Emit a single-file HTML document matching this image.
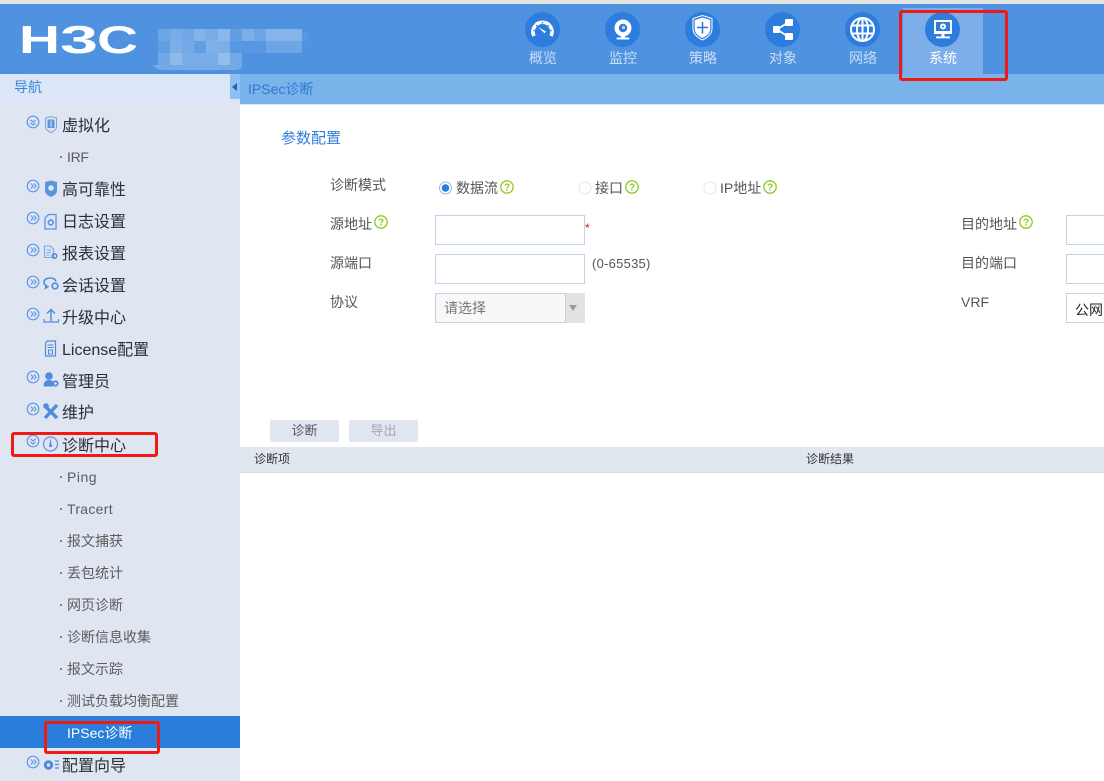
<!DOCTYPE html>
<html><head><meta charset="utf-8">
<style>
html,body{margin:0;padding:0;width:1104px;height:781px;overflow:hidden;background:#fff}
body{position:relative;font-family:"Liberation Sans","Noto Sans CJK SC",sans-serif;color:#555}
.a{position:absolute;white-space:nowrap}
.t{position:absolute;white-space:nowrap;line-height:20px;transform:translateY(-10px)}
.m{font-size:16px;color:#2a2f38;left:62px;margin-top:2px}
.s{font-size:14px;color:#5c5c5c;left:67px}
.d{position:absolute;left:60px;width:2px;height:2px;background:#4a8fdc}
.l{font-size:14px;color:#555}
.nv{font-size:14px;color:#c9def6;width:80px;text-align:center}
.inp{position:absolute;box-sizing:border-box;width:150px;height:30px;border:1px solid #c3d2e8;background:#fff}
.red{position:absolute;box-sizing:border-box;border:3px solid #f01a14;border-radius:3px}
svg{position:absolute;overflow:visible}
</style></head><body>
<div class="a" style="left:0;top:0;width:1104px;height:4px;background:#e4e4e4"></div>
<div class="a" style="left:0;top:4px;width:1104px;height:70px;background:#4f93e0"></div>
<div class="a" style="left:240px;top:74px;width:864px;height:30px;background:#7ab3ea"></div>
<div class="a" style="left:240px;top:104px;width:864px;height:1px;background:#d8e6f6"></div>
<div class="a" style="left:0;top:74px;width:240px;height:707px;background:#dfe5f1"></div>
<div class="a" style="left:0;top:74px;width:240px;height:26px;background:#dbe7f8"></div>
<div class="a" style="left:230px;top:74px;width:10px;height:25px;background:#8ec0f4"></div>
<div class="a" style="left:232px;top:83px;width:0;height:0;border-right:5px solid #1f66b8;border-top:4px solid transparent;border-bottom:4px solid transparent"></div>

<svg style="left:0;top:0" width="320" height="75">
<g font-family="Liberation Sans" font-weight="bold" font-size="39" fill="#fff" lengthAdjust="spacingAndGlyphs">
<text x="19" y="53" textLength="41" lengthAdjust="spacingAndGlyphs">H</text>
<text x="60" y="53" textLength="38" lengthAdjust="spacingAndGlyphs">3</text>
<text x="97" y="53" textLength="41" lengthAdjust="spacingAndGlyphs">C</text>
</g>
<g fill="#fff" opacity=".85">
<rect x="158" y="29" width="12" height="12" opacity=".2"/><rect x="170" y="29" width="12" height="12" opacity=".27"/><rect x="182" y="29" width="12" height="12" opacity=".22"/><rect x="194" y="29" width="12" height="12" opacity=".35"/><rect x="206" y="29" width="12" height="12" opacity=".28"/><rect x="218" y="29" width="12" height="12" opacity=".4"/><rect x="230" y="29" width="12" height="12" opacity=".12"/><rect x="242" y="29" width="12" height="12" opacity=".3"/><rect x="254" y="29" width="12" height="12" opacity=".2"/><rect x="266" y="29" width="36" height="12" opacity=".36"/>
<rect x="158" y="41" width="12" height="12" opacity=".12"/><rect x="170" y="41" width="12" height="12" opacity=".3"/><rect x="182" y="41" width="12" height="12" opacity=".24"/><rect x="194" y="41" width="12" height="12" opacity=".12"/><rect x="206" y="41" width="12" height="12" opacity=".32"/><rect x="218" y="41" width="12" height="12" opacity=".3"/><rect x="230" y="41" width="36" height="12" opacity=".06"/><rect x="266" y="41" width="36" height="12" opacity=".2"/>
<rect x="158" y="53" width="12" height="12" opacity=".22"/><rect x="170" y="53" width="12" height="12" opacity=".42"/><rect x="182" y="53" width="36" height="12" opacity=".28"/><rect x="218" y="53" width="12" height="12" opacity=".46"/><rect x="230" y="53" width="12" height="12" opacity=".24"/>
<path d="M153 65h89q0 5-8 5h-70q-8 0-11-5z" opacity=".25"/><path d="M302 29q8 4 8 12h-8z" opacity=".06"/>
</g></svg>

<div class="a" style="left:903px;top:8px;width:80px;height:66px;background:#7eaeea"></div>

<svg style="left:0;top:0" width="1104" height="75">
<g fill="#2c7ddd"><circle cx="542.500" cy="29.500" r="17.500"/><circle cx="622.500" cy="29.500" r="17.500"/><circle cx="702.500" cy="29.500" r="17.500"/><circle cx="782.500" cy="29.500" r="17.500"/><circle cx="862.500" cy="29.500" r="17.500"/><circle cx="942.500" cy="29.500" r="17.500"/></g>
<!-- gauge -->
<path d="M534 36A9.500 9.500 0 1 1 551 36" fill="none" stroke="#fff" stroke-width="3.600"/>
<path d="M538 27l8 4.500-1.500 1.800z" fill="#fff"/>
<g fill="#2c7ddd"><circle cx="534" cy="30.500" r=".8"/><circle cx="536.500" cy="25.500" r=".8"/><circle cx="542.500" cy="22.800" r=".8"/><circle cx="548.500" cy="25.500" r=".8"/><circle cx="551" cy="30.500" r=".8"/></g>
<!-- camera -->
<circle cx="623" cy="28" r="8.500" fill="#fff"/><circle cx="623" cy="28" r="4.200" fill="#2c7ddd"/><circle cx="623.500" cy="27.500" r="1.600" fill="#fff" opacity=".7"/>
<rect x="621" y="35" width="4" height="3" fill="#fff"/><rect x="616.500" y="37.500" width="13" height="2" rx="1" fill="#fff"/>
<!-- shield -->
<path d="M702.500 15.500l9.500 3v10q0 7-9.500 11.500q-9.500-4.500-9.500-11.500v-10z" fill="none" stroke="#fff" stroke-width="1"/>
<path d="M702.500 17.500l7.800 2.500v8.500q0 6-7.800 9.500q-7.800-3.500-7.800-9.500v-8.500z" fill="#fff"/>
<path d="M702.500 22v11.500M697 27.500h11" stroke="#2c7ddd" stroke-width="1.500"/>
<!-- share -->
<rect x="773" y="26" width="7" height="7" fill="#fff" rx="1"/><rect x="785" y="19" width="8" height="7" fill="#fff" rx="1"/><rect x="785" y="33" width="8" height="7" fill="#fff" rx="1"/>
<path d="M777 29.500L788 22.500M777 29.500L788 36.500" stroke="#fff" stroke-width="1.800"/>
<!-- globe -->
<g fill="none" stroke="#fff" stroke-width="2"><circle cx="862.500" cy="29.500" r="11.500"/><ellipse cx="862.500" cy="29.500" rx="5.500" ry="11.500"/><path d="M862.500 18v23M852 25.500h21M852 33.500h21"/></g>
<!-- monitor -->
<rect x="935" y="21" width="16" height="12" fill="none" stroke="#fff" stroke-width="2"/>
<rect x="934" y="31" width="18" height="3" fill="#fff"/>
<rect x="941.500" y="34" width="3" height="2.500" fill="#fff"/><rect x="936" y="36.500" width="14" height="1.800" fill="#fff"/>
<circle cx="943" cy="26.500" r="3" fill="#fff"/><circle cx="943" cy="26.500" r="1" fill="#2c7ddd"/>
</svg>

<div class="t nv" style="left:503px;top:58px">概览</div>
<div class="t nv" style="left:583px;top:58px">监控</div>
<div class="t nv" style="left:663px;top:58px">策略</div>
<div class="t nv" style="left:743px;top:58px">对象</div>
<div class="t nv" style="left:823px;top:58px">网络</div>
<div class="t nv" style="left:903px;top:58px;color:#fff">系统</div>

<div class="t" style="left:14px;top:87px;font-size:14px;color:#3d84d8">导航</div>
<div class="t" style="left:248px;top:89px;font-size:14px;color:#2f78d2">IPSec诊断</div>

<!-- sidebar -->
<div class="a" style="left:0;top:716px;width:240px;height:32px;background:#2b7ddb"></div>
<div class="t m" style="top:125px">虚拟化</div>
<div class="d" style="top:156px"></div><div class="t s" style="top:157px;letter-spacing:-.3px">IRF</div>
<div class="t m" style="top:189px">高可靠性</div>
<div class="t m" style="top:221px">日志设置</div>
<div class="t m" style="top:253px">报表设置</div>
<div class="t m" style="top:285px">会话设置</div>
<div class="t m" style="top:317px">升级中心</div>
<div class="t m" style="top:349px">License配置</div>
<div class="t m" style="top:381px">管理员</div>
<div class="t m" style="top:412px">维护</div>
<div class="t m" style="top:445px">诊断中心</div>
<div class="d" style="top:476px"></div><div class="t s" style="top:477px;letter-spacing:.5px">Ping</div>
<div class="d" style="top:508px"></div><div class="t s" style="top:509px;letter-spacing:.3px">Tracert</div>
<div class="d" style="top:540px"></div><div class="t s" style="top:541px">报文捕获</div>
<div class="d" style="top:572px"></div><div class="t s" style="top:573px">丢包统计</div>
<div class="d" style="top:604px"></div><div class="t s" style="top:605px">网页诊断</div>
<div class="d" style="top:636px"></div><div class="t s" style="top:637px">诊断信息收集</div>
<div class="d" style="top:668px"></div><div class="t s" style="top:669px">报文示踪</div>
<div class="d" style="top:700px"></div><div class="t s" style="top:701px">测试负载均衡配置</div>
<div class="t s" style="top:733px;color:#fff">IPSec诊断</div>
<div class="t m" style="top:765px">配置向导</div>

<svg style="left:0;top:100px" width="240" height="681" viewBox="0 100 240 681">
<g fill="none" stroke="#5d9ae4" stroke-width="1.200">
<circle cx="33" cy="122" r="5.800"/><circle cx="33" cy="186" r="5.800"/><circle cx="33" cy="218" r="5.800"/><circle cx="33" cy="250" r="5.800"/><circle cx="33" cy="282" r="5.800"/><circle cx="33" cy="314" r="5.800"/><circle cx="33" cy="377" r="5.800"/><circle cx="33" cy="409" r="5.800"/><circle cx="33" cy="441" r="5.800"/><circle cx="33" cy="762" r="5.800"/>
<path d="M30.500 120l2.500 2 2.500-2M30.500 123l2.500 2 2.500-2M30.500 439l2.500 2 2.500-2M30.500 442l2.500 2 2.500-2"/>
<path d="M31 183.500l2 2.500-2 2.500M34 183.500l2 2.500-2 2.500M31 215.500l2 2.500-2 2.500M34 215.500l2 2.500-2 2.500M31 247.500l2 2.500-2 2.500M34 247.500l2 2.500-2 2.500M31 279.500l2 2.500-2 2.500M34 279.500l2 2.500-2 2.500M31 311.500l2 2.500-2 2.500M34 311.500l2 2.500-2 2.500M31 374.500l2 2.500-2 2.500M34 374.500l2 2.500-2 2.500M31 406.500l2 2.500-2 2.500M34 406.500l2 2.500-2 2.500M31 759.500l2 2.500-2 2.500M34 759.500l2 2.500-2 2.500"/>
</g>
<!-- virtual shield -->
<path d="M45.500 118l5.500-1.500 5.500 1.500v9q0 3-5.500 5.500q-5.500-2.500-5.500-5.500z" fill="none" stroke="#76a6e4" stroke-width="1"/><rect x="47.500" y="119.500" width="7" height="8.500" fill="#5f96dd"/><rect x="50.500" y="120.500" width="1" height="6.500" fill="#dfe5f1"/>
<!-- HA shield -->
<path d="M45 182l6-1.500 6 1.500v9q0 3.500-6 6q-6-2.500-6-6z" fill="#5b95e0"/><circle cx="51" cy="188" r="2.800" fill="#dfe5f1"/>
<!-- log doc -->
<path d="M48.500 214.500h7.500v14.500h-11v-11z" fill="none" stroke="#5b95e0" stroke-width="1.300"/><circle cx="50.800" cy="222.500" r="2.400" fill="none" stroke="#5b95e0" stroke-width="1.700"/>
<!-- report -->
<path d="M44.500 246h6l3 3v8.500h-9z" fill="none" stroke="#76a6e4" stroke-width="1.100"/><path d="M46.500 250h4.500M46.500 252.500h4.500M46.500 255h3" stroke="#76a6e4"/><circle cx="54.500" cy="256" r="2.200" fill="none" stroke="#4f8cdc" stroke-width="1.600"/>
<!-- chat -->
<path d="M50 278c-3.500 0-6 1.700-6 4.200 0 1.500 1 2.800 2.300 3.500l-.7 2.300 3-1.700" fill="none" stroke="#4f8cdc" stroke-width="1.600"/><path d="M50 278c3.500 0 5.500 1.500 6 3.500" fill="none" stroke="#4f8cdc" stroke-width="1.600"/><circle cx="55" cy="286" r="2.800" fill="none" stroke="#4f8cdc" stroke-width="1.700"/>
<!-- upload -->
<path d="M51 321v-11M47 313.500l4-4 4 4" fill="none" stroke="#4f8cdc" stroke-width="1.500"/><path d="M44 319v3h14.500v-3" fill="none" stroke="#4f8cdc" stroke-width="1.200"/>
<!-- license -->
<path d="M47 341h8.500v15h-10v-12.500z" fill="none" stroke="#4f8cdc" stroke-width="1.200"/><path d="M47.500 345h6M47.500 347.500h6" stroke="#4f8cdc"/><rect x="48.500" y="350" width="4" height="4" fill="none" stroke="#4f8cdc"/>
<!-- admin -->
<circle cx="49" cy="376" r="3.800" fill="#4f8cdc"/><path d="M43.500 386.500q0-6.500 5.500-6.500q3 0 4 1.500v5z" fill="#4f8cdc"/><circle cx="55.500" cy="383.500" r="2.200" fill="none" stroke="#4f8cdc" stroke-width="1.800"/>
<!-- tools -->
<path d="M45 406l12 12M57 405l-12 13" stroke="#4f8cdc" stroke-width="3.400"/><circle cx="46" cy="406" r="2.800" fill="#4f8cdc"/>
<!-- diagnostic -->
<circle cx="50.500" cy="444" r="7" fill="none" stroke="#5b95e0" stroke-width="1.200"/><path d="M50.500 438.500l1.500 8.500h-3z" fill="#4f8cdc"/>
<!-- wizard -->
<circle cx="48.500" cy="765" r="3.200" fill="none" stroke="#4f8cdc" stroke-width="3"/><path d="M55 761h4M55 764.500h4M55 768h4" stroke="#4f8cdc" stroke-width="1.300"/>
</svg>

<!-- form -->
<div class="t" style="left:281px;top:138px;font-size:15px;color:#2f7fd8;margin-top:1px">参数配置</div>
<div class="t l" style="left:330px;top:185px;font-size:14px">诊断模式</div>
<div class="t l" style="left:330px;top:224px">源地址</div>
<div class="t l" style="left:330px;top:263px">源端口</div>
<div class="t l" style="left:330px;top:302px">协议</div>
<div class="t l" style="left:456px;top:188px">数据流</div>
<div class="t l" style="left:595px;top:188px">接口</div>
<div class="t l" style="left:720px;top:188px">IP地址</div>
<div class="t l" style="left:961px;top:224px">目的地址</div>
<div class="t l" style="left:961px;top:263px">目的端口</div>
<div class="t l" style="left:961px;top:302px">VRF</div>
<div class="inp" style="left:435px;top:215px"></div>
<div class="inp" style="left:435px;top:254px"></div>
<div class="inp" style="left:435px;top:293px;background:#f8f8f8;width:131px"></div>
<div class="a" style="left:566px;top:293px;width:19px;height:30px;background:#e2e2e2"></div>
<div class="a" style="left:569px;top:305px;width:0;height:0;border-top:6px solid #9a9a9a;border-left:4.500px solid transparent;border-right:4.500px solid transparent"></div>
<div class="t" style="left:444px;top:308px;font-size:14px;color:#777">请选择</div>
<div class="t" style="left:585px;top:228px;font-size:12px;color:#e01010">*</div>
<div class="t" style="left:592px;top:264px;font-size:13px;color:#555;letter-spacing:.25px">(0-65535)</div>
<div class="inp" style="left:1066px;top:215px"></div>
<div class="inp" style="left:1066px;top:254px"></div>
<div class="inp" style="left:1066px;top:293px"></div>
<div class="t" style="left:1075px;top:310px;font-size:14px;color:#222">公网</div>

<svg style="left:0;top:0" width="1104" height="330">
<circle cx="445.500" cy="188" r="6" fill="#fff" stroke="#8db8ec"/><circle cx="445.500" cy="188" r="3.800" fill="#2b7ddb"/>
<circle cx="585" cy="188" r="6" fill="#fff" stroke="#e8e8e8"/><circle cx="710" cy="188" r="6" fill="#fff" stroke="#e8e8e8"/>
<g fill="#fff" stroke="#8ccb1e" stroke-width="1.300"><circle cx="507" cy="187" r="6.200"/><circle cx="632" cy="187" r="6.200"/><circle cx="770" cy="187" r="6.200"/><circle cx="381" cy="222" r="6.200"/><circle cx="1026" cy="222" r="6.200"/></g>
<g font-family="Liberation Sans" font-size="10" font-weight="bold" fill="#8ccb1e" text-anchor="middle"><text x="507" y="190.500">?</text><text x="632" y="190.500">?</text><text x="770" y="190.500">?</text><text x="381" y="225.500">?</text><text x="1026" y="225.500">?</text></g>
</svg>

<!-- buttons -->
<div class="a" style="left:270px;top:420px;width:69px;height:22px;background:#dfe5f1;border-radius:2px;text-align:center;line-height:22px;font-size:13px;color:#555">诊断</div>
<div class="a" style="left:349px;top:420px;width:69px;height:22px;background:#dfe5f1;border-radius:2px;text-align:center;line-height:22px;font-size:13px;color:#a8a8a8">导出</div>
<div class="a" style="left:240px;top:447px;width:864px;height:25px;background:#e1e7ef;border-bottom:1px solid #d3d9ea"></div>
<div class="t" style="left:254px;top:459px;font-size:12px;color:#333">诊断项</div>
<div class="t" style="left:806px;top:459px;font-size:12px;color:#333">诊断结果</div>

<!-- annotations -->
<div class="red" style="left:899px;top:10px;width:109px;height:71px"></div>
<div class="red" style="left:11px;top:432px;width:147px;height:25px"></div>
<div class="red" style="left:44px;top:721px;width:116px;height:33px"></div>
</body></html>
